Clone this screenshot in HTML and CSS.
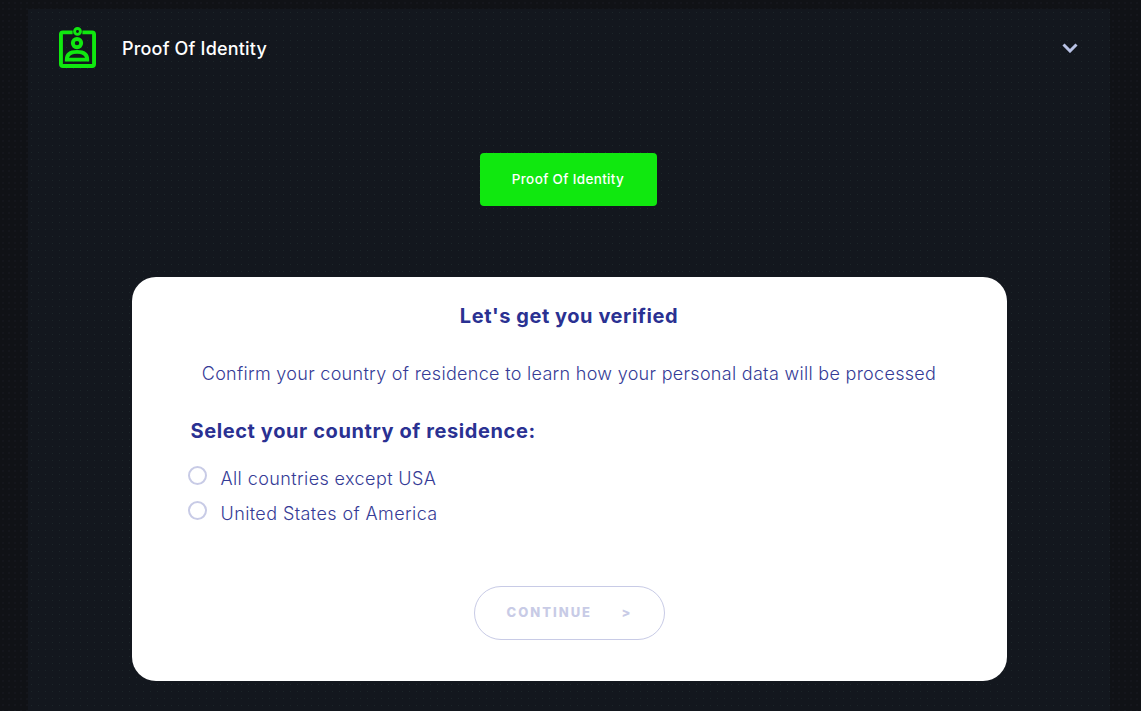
FILE: index.html
```html
<!DOCTYPE html>
<html lang="en">
<head>
	<meta charset="UTF-8">
	<title>Proof Of Identity</title>
	<link rel="stylesheet" href="styles.css">
</head>
<body>
	<div class="panel">
		<div class="header">
			<svg class="idIcon" viewBox="0 0 38 42" fill="none" stroke="#10e80f" stroke-width="4">
				<path d="M14 5.500H4a2 2 0 0 0-2 2V38a2 2 0 0 0 2 2h30a2 2 0 0 0 2-2V7.500a2 2 0 0 0-2-2H24"/>
				<circle cx="19" cy="4.500" r="3" stroke-width="3"/>
				<circle cx="18.500" cy="16.500" r="4.300"/>
				<path d="M8 33.500c0-5.500 4-8 10.500-8s10.500 2.500 10.500 8z"/>
			</svg>
			<span class="headerTitle">Proof Of Identity</span>
			<svg class="chevron" viewBox="0 0 16 10" fill="none" stroke="#b9c3e6" stroke-width="3">
				<path d="M1.500 1.500L8 8l6.500-6.500"/>
			</svg>
		</div>
		<div class="tabRow">
			<div class="tab">Proof Of Identity</div>
		</div>
		<div class="card">
			<h2 class="cardTitle">Let's get you verified</h2>
			<p class="cardText">Confirm your country of residence to learn how your personal data will be processed</p>
			<h3 class="selectTitle">Select your country of residence:</h3>
			<label class="option"><span class="radio"></span>All countries except USA</label>
			<label class="option"><span class="radio"></span>United States of America</label>
			<div class="continueRow">
				<div class="continue"><span>CONTINUE</span><span>&gt;</span></div>
			</div>
		</div>
	</div>
</body>
</html>
```

FILE: styles.css
```css
*{
	margin: 0;
	padding: 0;
	box-sizing: border-box;
}
html,body{
	height: 711px;
	overflow: hidden;
}
body{
	padding: 9px 31px 0 28px;
	background-color: #101216;
	background-image: radial-gradient(#15171c 0.7px, transparent 0.8px);
	background-size: 6px 6px;
	font-family: "Inter", "Open Sans", sans-serif;
}
.panel{
	height: 702px;
	background-color: #13171e;
	background-image: radial-gradient(#1c2529 0.6px, transparent 0.7px);
	background-size: 7px 7px;
}
.header{
	display: flex;
	align-items: center;
	height: 77px;
	padding: 0 32px 0 31px;
}
.idIcon{
	width: 37px;
	height: 41px;
}
.headerTitle{
	flex: 1;
	margin-left: 26px;
	padding-top: 2px;
	font-size: 18px;
	font-weight: 500;
	letter-spacing: 0.180px;
	color: #fff;
}
.chevron{
	width: 16px;
	height: 10px;
}
.tabRow{
	display: flex;
	justify-content: center;
	margin-top: 67px;
	padding-right: 2px;
}
.tab{
	width: 177px;
	height: 53px;
	line-height: 53px;
	border-radius: 4px;
	background-color: #10e80f;
	color: #fff;
	font-size: 13.500px;
	font-weight: 500;
	letter-spacing: 0.350px;
	text-align: center;
}
.card{
	width: 875px;
	height: 404px;
	margin: 71px auto 0;
	padding: 26px 56px 0;
	border-radius: 24px;
	background-color: #fff;
	color: #2a3192;
}
.cardTitle{
	font-size: 20px;
	font-weight: 700;
	letter-spacing: 0.550px;
	line-height: 26px;
	text-align: center;
}
.cardText{
	margin-top: 32px;
	font-size: 18px;
	line-height: 26px;
	font-weight: 300;
	letter-spacing: 0.300px;
	text-align: center;
	white-space: nowrap;
	color: #353b96;
}
.selectTitle{
	margin: 31px 0 17px 3px;
	font-size: 20px;
	font-weight: 700;
	letter-spacing: 0.600px;
	line-height: 26px;
}
.option{
	display: flex;
	align-items: center;
	height: 35px;
	font-size: 18px;
	font-weight: 300;
	letter-spacing: 0.400px;
	color: #353b96;
}
.radio{
	width: 19px;
	height: 19px;
	margin-right: 14px;
	margin-bottom: 6px;
	border: 2px solid #c8cbe6;
	border-radius: 50%;
}
.continueRow{
	display: flex;
	justify-content: center;
	margin-top: 55px;
}
.continue{
	display: flex;
	justify-content: space-between;
	align-items: center;
	width: 191px;
	height: 54px;
	padding: 0 31px 2px 32px;
	border: 1px solid #c8cbe6;
	border-radius: 27px;
	color: #c8cbe6;
	font-size: 13px;
	font-weight: 800;
	letter-spacing: 2px;
}
```
